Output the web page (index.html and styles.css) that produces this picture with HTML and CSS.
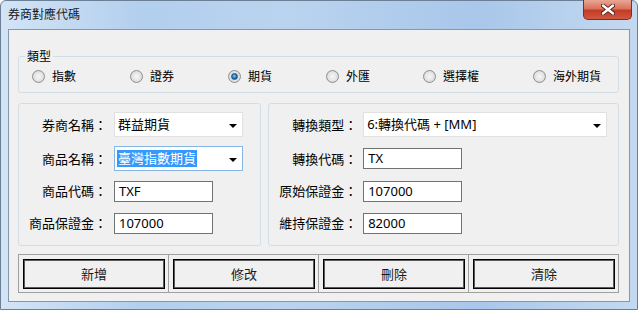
FILE: index.html
```html
<!DOCTYPE html>
<html lang="zh-Hant">
<head>
  <meta charset="UTF-8">
  <title>券商對應代碼</title>
  <link rel="stylesheet" href="styles.css">
</head>
<body>
  <div class="window">
    <div class="titlebar">
      <span class="title">券商對應代碼</span>
      <button class="close-btn" title="關閉">
        <svg width="14" height="11" viewBox="0 0 14 11">
          <path d="M2 1.5 L12 9.5 M12 1.5 L2 9.5" stroke="#5a1d14" stroke-width="4.2" stroke-linecap="round"/>
          <path d="M2 1.5 L12 9.5 M12 1.5 L2 9.5" stroke="#fff" stroke-width="2.4" stroke-linecap="round"/>
        </svg>
      </button>
    </div>

    <div class="client">
      <!-- 類型 -->
      <fieldset class="type-group">
        <legend>類型</legend>
        <div class="radio-row">
          <label class="radio w98"><span class="dot"></span>指數</label>
          <label class="radio w98"><span class="dot"></span>證券</label>
          <label class="radio w98"><span class="dot checked"></span>期貨</label>
          <label class="radio w97"><span class="dot"></span>外匯</label>
          <label class="radio w110"><span class="dot"></span>選擇權</label>
          <label class="radio"><span class="dot"></span>海外期貨</label>
        </div>
      </fieldset>

      <div class="panels">
        <div class="panel panel-left">
          <div class="form">
            <span class="lbl">券商名稱：</span>
            <div class="combo combo-short"><span class="val">群益期貨</span><i class="arrow"></i></div>

            <span class="lbl">商品名稱：</span>
            <div class="combo combo-short focused"><span class="val selected">臺灣指數期貨</span><i class="arrow"></i></div>

            <span class="lbl">商品代碼：</span>
            <div class="textbox">TXF</div>

            <span class="lbl">商品保證金：</span>
            <div class="textbox">107000</div>
          </div>
        </div>

        <div class="panel panel-right">
          <div class="form">
            <span class="lbl">轉換類型：</span>
            <div class="combo combo-long"><span class="val">6:轉換代碼 + [MM]</span><i class="arrow"></i></div>

            <span class="lbl">轉換代碼：</span>
            <div class="textbox">TX</div>

            <span class="lbl">原始保證金：</span>
            <div class="textbox">107000</div>

            <span class="lbl">維持保證金：</span>
            <div class="textbox">82000</div>
          </div>
        </div>
      </div>

      <div class="actions">
        <div class="cell"><button class="act-btn">新增</button></div>
        <div class="cell"><button class="act-btn">修改</button></div>
        <div class="cell"><button class="act-btn">刪除</button></div>
        <div class="cell"><button class="act-btn">清除</button></div>
      </div>
    </div>
  </div>
</body>
</html>
```

FILE: styles.css
```css
body {
  margin: 0;
  width: 638px;
  height: 310px;
  overflow: hidden;
  font-family: "Noto Sans", "Noto Sans CJK TC", sans-serif;
  color: #000;
}
.window {
  box-sizing: border-box;
  width: 638px;
  height: 310px;
  padding: 0 7px 7px 7px;
  border: 1px solid #6b7f96;
  border-radius: 6px 6px 0 0;
  background: linear-gradient(to right, #d3e4f5 0%, #b3cfee 22%, #bad3ef 45%, #a9c7ea 75%, #c4d9f0 100%);
  display: flex;
  flex-direction: column;
}
.titlebar {
  height: 28px;
  display: flex;
  align-items: flex-start;
}
.title {
  font-size: 12px;
  line-height: 16px;
  margin-top: 6px;
  color: #1a1a1a;
}
.close-btn {
  margin-left: auto;
  margin-right: -2px;
  margin-top: -1px;
  width: 49px;
  height: 20px;
  padding: 0;
  border: 1px solid #7a2f24;
  border-top: none;
  border-radius: 0 0 5px 5px;
  background: linear-gradient(to bottom, #e9a795 0%, #d8735e 45%, #c43b26 55%, #d0583f 100%);
  display: flex;
  align-items: center;
  justify-content: center;
}

/* client area */
.client {
  box-sizing: border-box;
  height: 274px;
  border: 1px solid #8497ad;
  background-color: #f0f0f0;
  display: flex;
  flex-direction: column;
  padding: 0 10px 0 9px;
}
.type-group {
  margin: 19px 0 0 0;
  padding: 4px 6px 7px 6px;
  border: 1px solid #d3dde5;
  border-radius: 3px;
  min-inline-size: 0;
}
.type-group legend {
  font-size: 12px;
  line-height: 16px;
  padding: 0 2px;
}
.radio-row {
  display: flex;
  padding-left: 7px;
}
.radio {
  display: flex;
  align-items: center;
  font-size: 12px;
  line-height: 16px;
}
.w98 { width: 98px; }
.w97 { width: 97px; }
.w110 { width: 110px; }
.dot {
  box-sizing: border-box;
  width: 13px;
  height: 13px;
  margin-right: 7px;
  border: 1px solid #8e8f8f;
  border-radius: 50%;
  background: radial-gradient(circle at 50% 50%, #f6f6f6 0%, #e8e8e8 45%, #c9c9c9 100%);
  display: flex;
  align-items: center;
  justify-content: center;
}
.dot.checked::after {
  content: "";
  width: 5px;
  height: 5px;
  border-radius: 50%;
  background: radial-gradient(circle at 45% 40%, #8ad0f5 0%, #2a82c4 45%, #103f70 100%);
  border: 1px solid #1a4f80;
}

/* panels */
.panels {
  display: flex;
  gap: 7px;
  margin-top: 10px;
}
.panel {
  box-sizing: border-box;
  height: 143px;
  border: 1px solid #d3dde5;
  border-radius: 3px;
  padding: 4px 0 0 8px;
}
.panel-left { width: 244px; }
.panel-right { width: 352px; }
.form {
  display: grid;
  grid-template-columns: 80px auto;
  grid-template-rows: 34px 34px 31px 33px;
  column-gap: 6px;
  align-items: center;
  justify-items: start;
}
.panel-left .form { column-gap: 7px; }
.lbl {
  justify-self: end;
  font-family: "Noto Sans CJK TC", sans-serif;
  font-size: 13px;
  line-height: 16px;
  white-space: nowrap;
}
.combo {
  box-sizing: border-box;
  height: 25px;
  background-color: #fff;
  border: 1px solid #e1e1e1;
  display: flex;
  align-items: center;
  padding: 0 5px 0 2px;
  font-size: 13px;
}
.combo.focused { border-color: #86b6e6; }
.combo-short { width: 129px; }
.combo-long { width: 244px; }
.combo .val {
  line-height: 17px;
  padding: 0 1px;
  white-space: nowrap;
}
.combo .selected {
  background-color: #3399ff;
  color: #fff;
}
.arrow {
  margin-left: auto;
  width: 0;
  height: 0;
  border-left: 4px solid transparent;
  border-right: 4px solid transparent;
  border-top: 4px solid #000;
  margin-top: 2px;
}
.textbox {
  box-sizing: border-box;
  width: 99px;
  height: 21px;
  background-color: #fff;
  border: 1px solid #727272;
  padding: 0 4px;
  font-size: 13px;
  line-height: 19px;
}

/* bottom buttons */
.actions {
  margin-top: 8px;
  height: 39px;
  box-sizing: border-box;
  display: grid;
  grid-template-columns: repeat(4, 1fr);
  gap: 1px;
  padding: 1px;
  background-color: #a0a0a0;
}
.cell {
  background-color: #f0f0f0;
  padding: 4px 3px 3px 4px;
  display: flex;
}
.act-btn {
  flex: 1;
  height: 30px;
  border: 1px solid #000;
  box-shadow: inset 0 0 0 1px #5a5a5a;
  background-color: #f0f0f0;
  font-family: "Noto Sans CJK TC", sans-serif;
  font-size: 13px;
  color: #1a1a1a;
  padding: 0;
}
```
